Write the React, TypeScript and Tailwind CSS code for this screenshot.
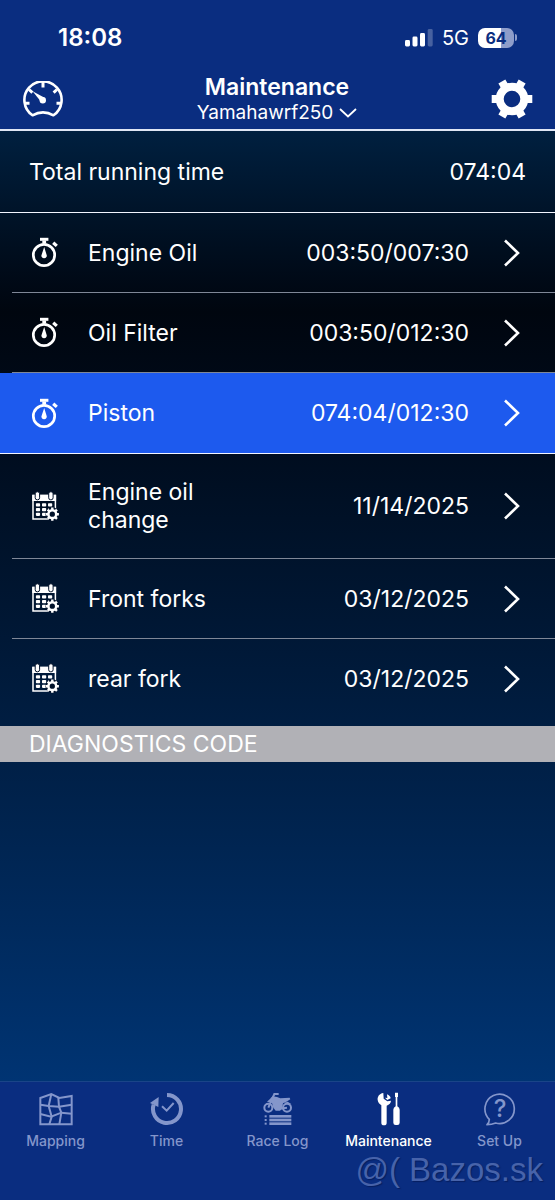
import type { ReactNode } from "react";

const INK = "#001129";

function GaugeIcon() {
  return (
    <svg width="40" height="37" viewBox="0 0 40 37" fill="none" stroke="white">
      <path
        d="M9.5 34.3A18.6 18.6 0 1 1 30.5 34.3Q20 28.5 9.5 34.3Z"
        strokeWidth="2.6"
        strokeLinejoin="round"
      />
      <path d="M20 1v5.5M2 22.3h4.5M33.5 22.3h4.5M6 8.5l3.4 3.2M34 8.5l-3.4 3.2" strokeWidth="3" />
      <path d="M9.6 10.2L21.6 16.8L18 20.8Z" fill="white" stroke="none" />
      <circle cx="19.8" cy="19.3" r="3.2" fill="white" stroke="none" />
    </svg>
  );
}

function GearIcon() {
  return (
    <svg width="42" height="40" viewBox="-21 -20 42 40" fill="none" stroke="white">
      <circle r="12.3" strokeWidth="8" />
      <g strokeWidth="8">
        <path d="M-20.3 0H-13M13 0H20.3" />
        <path d="M-20.3 0H-13M13 0H20.3" transform="rotate(60)" />
        <path d="M-20.3 0H-13M13 0H20.3" transform="rotate(120)" />
      </g>
    </svg>
  );
}

function StopwatchIcon() {
  return (
    <svg width="30" height="31" viewBox="0 0 30 31" fill="white">
      <circle cx="14" cy="18" r="10.7" fill="none" stroke="white" strokeWidth="2.7" />
      <rect x="10" y="0.8" width="8.4" height="3" />
      <rect x="12.3" y="3.5" width="3.8" height="3" />
      <rect x="-2.4" y="-1.6" width="4.8" height="3.2" transform="translate(25 7.3) rotate(42)" />
      <path d="M14.2 10L16.5 17.4A2.7 2.7 0 1 1 11.7 17.4Z" />
    </svg>
  );
}

function CalendarIcon() {
  return (
    <svg width="30" height="31" viewBox="0 0 30 31" fill="white">
      <path d="M3 4.5H25.4V28H3Z" fill="none" stroke="white" strokeWidth="1.5" />
      <rect x="2.3" y="3.8" width="23.8" height="6.2" />
      <g stroke={INK} strokeWidth="1">
        <rect x="5.2" y="0.8" width="4.4" height="8" rx="2" />
        <rect x="18.7" y="0.8" width="4.4" height="8" rx="2" />
      </g>
      {[12.3, 17, 21.7].map((y) => (
        <g key={y}>
          <rect x="5.9" y={y} width="4.2" height="3.2" rx="0.8" />
          <rect x="12" y={y} width="4.2" height="3.2" rx="0.8" />
          <rect x="18" y={y} width="4.2" height="3.2" rx="0.8" />
        </g>
      ))}
      <g transform="translate(22.3 23.2)">
        <circle r="6.9" fill={INK} />
        <circle r="3.9" fill="none" stroke="white" strokeWidth="2.5" />
        {[0, 45, 90, 135].map((deg) => (
          <path
            key={deg}
            d="M-6.6 0H-4M4 0H6.6"
            stroke="white"
            strokeWidth="2.4"
            transform={`rotate(${deg})`}
          />
        ))}
      </g>
    </svg>
  );
}

function ChevronRight() {
  return (
    <svg width="18" height="28" viewBox="0 0 18 28" fill="none" stroke="white" strokeWidth="2.6">
      <path d="M2 1.5L15 14L2 26.5" />
    </svg>
  );
}

function MapIcon() {
  return (
    <svg width="34" height="34" viewBox="0 0 102 102" fill="none" stroke="currentColor" strokeWidth="6">
      <path d="M4 18L37 6L61 18L98 12V97H4Z" />
      <path d="M4 38L29 42L60 44L98 38M4 66L36 74L67 62L98 65" />
      <path d="M37 6L29 42L38 74L31 97M58 18L60 44L67 62L61 97" />
    </svg>
  );
}

function TimeIcon() {
  return (
    <svg width="34" height="34" viewBox="0 0 102 102" fill="none" stroke="currentColor">
      <path d="M51 9A42 42 0 1 1 11 38" strokeWidth="12" />
      <path d="M0 33L26 15L25 45Z" fill="currentColor" stroke="none" />
      <path d="M36 43L50 56L71 33" strokeWidth="6" />
    </svg>
  );
}

function RaceIcon() {
  return (
    <svg width="30" height="34" viewBox="0 0 90 102" fill="currentColor">
      <g fill="none" stroke="currentColor" strokeWidth="6">
        <circle cx="16" cy="47" r="12" />
        <circle cx="72" cy="47" r="12" />
        <path d="M16 47L34 6H47M48 50L72 47" />
      </g>
      <path d="M28 13L42 15L52 19L80 17L82 22L70 29L60 34L57 50L51 56H38L31 47L27 33L12 29L20 22Z" />
      <path d="M62 31L74 29L86 37L80 36L70 32Z" />
      <rect x="19" y="69" width="66" height="8" />
      <rect x="19" y="80" width="66" height="8" />
      <rect x="19" y="91" width="66" height="8" />
      <rect x="5" y="70" width="6" height="6" />
      <rect x="5" y="81" width="6" height="6" />
      <rect x="5" y="92" width="6" height="6" />
    </svg>
  );
}

function ToolsIcon() {
  return (
    <svg width="26" height="34" viewBox="32 19 78 102" fill="currentColor">
      <path d="M54 22C41 24 36 34 37 43C38 51 43 55 48 59V111A8 8 0 0 0 64 111V60C72 57 77 51 77 45L66 47L55 39Z" />
      <path d="M65 26L66 37L59 36L66 43L76 38C76 33 71 28 65 26Z" />
      <path d="M89 21H98V34H96V62Q103 66 103 72V111Q103 118 96 118H91Q84 118 84 111V72Q84 66 91 62V34H89Z" />
    </svg>
  );
}

function HelpIcon() {
  return (
    <svg width="34" height="34" viewBox="0 0 102 102" fill="none" stroke="currentColor" strokeWidth="5">
      <path d="M19 82A44 44 0 1 1 38 93Q26 98 12 98Q19 92 19 82Z" strokeLinejoin="round" />
      <text
        x="51"
        y="76"
        textAnchor="middle"
        fontSize="72"
        fontWeight="500"
        fill="currentColor"
        stroke="none"
      >
        ?
      </text>
    </svg>
  );
}

function StatusBar() {
  return (
    <div className="flex h-[75px] items-center justify-between pr-[38px] pl-[58px]">
      <span className="text-2xl font-semibold">18:08</span>
      <div className="flex items-center gap-[9px]">
        <svg width="28" height="18" viewBox="0 0 28 18" fill="white">
          <rect x="0" y="11" width="5" height="6.5" rx="1.4" />
          <rect x="7.5" y="7.5" width="5" height="10" rx="1.4" />
          <rect x="15" y="4" width="5" height="13.5" rx="1.4" />
          <rect x="22.7" y="0" width="5" height="17.5" rx="1.4" opacity="0.25" />
        </svg>
        <span className="text-xl">5G</span>
        <div className="flex items-center gap-px">
          <span className="flex h-5 w-9 items-center justify-center rounded-[7px] bg-linear-to-r from-white from-64% to-[#8e9dca] to-64% text-base font-bold text-[#0a2d80]">
            64
          </span>
          <span className="h-[7px] w-0.5 rounded-r-full bg-[#8e9dca]" />
        </div>
      </div>
    </div>
  );
}

function Header() {
  return (
    <header className="border-b-2 border-[#dfe6f5] bg-[#0a2d80]">
      <StatusBar />
      <div className="flex h-[54px] items-center justify-between pr-[22px] pb-1.5 pl-[23px]">
        <button aria-label="Dashboard">
          <GaugeIcon />
        </button>
        <div className="flex flex-col items-center">
          <h1 className="text-[23px] leading-7 font-semibold">Maintenance</h1>
          <button className="flex items-center gap-1.5 text-[19px] leading-6">
            Yamahawrf250
            <svg width="18" height="10" viewBox="0 0 18 10" fill="none" stroke="white" strokeWidth="1.8">
              <path d="M1 1L9 8.5L17 1" />
            </svg>
          </button>
        </div>
        <button aria-label="Settings">
          <GearIcon />
        </button>
      </div>
    </header>
  );
}

type ItemProps = {
  icon: ReactNode;
  label: string;
  value: string;
  active?: boolean;
  last?: boolean;
};

function Item({ icon, label, value, active, last }: ItemProps) {
  return (
    <li className={active ? "border-b border-[#f2f5ff] bg-[#1d5aee]" : last ? "" : "pl-3"}>
      <button
        className={`flex w-full items-center pr-[34px] text-left ${
          last ? "min-h-[87px] pb-2" : "min-h-20 py-6"
        } ${active || last ? "pl-[30px]" : "border-b border-[#7f8797] pl-[18px]"}`}
      >
        <span className="w-[58px] shrink-0">{icon}</span>
        <span className="w-40">{label}</span>
        <span className="flex-1 pr-[34px] text-right">{value}</span>
        <ChevronRight />
      </button>
    </li>
  );
}

function Tab({ icon, label, active }: { icon: ReactNode; label: string; active?: boolean }) {
  return (
    <a
      href="#"
      aria-current={active ? "page" : undefined}
      className={`flex flex-1 flex-col items-center gap-[5px] ${
        active ? "text-white" : "text-[#8496cb]"
      }`}
    >
      {icon}
      <span className="text-sm leading-5 font-medium">{label}</span>
    </a>
  );
}

function App() {
  return (
    <div className="relative flex min-h-screen flex-col bg-[#0a2d80] font-['Inter','Liberation_Sans',sans-serif] text-white">
      <Header />

      <main className="flex-1 bg-linear-to-b from-[#002040] via-[#00060f] via-19% to-[#003473] text-[23px] leading-7">
        <div className="flex h-[82px] items-center justify-between border-b border-[#f2f5ff] px-[29px]">
          <span>Total running time</span>
          <span>074:04</span>
        </div>
        <ul>
          <Item icon={<StopwatchIcon />} label="Engine Oil" value="003:50/007:30" />
          <Item icon={<StopwatchIcon />} label="Oil Filter" value="003:50/012:30" />
          <Item icon={<StopwatchIcon />} label="Piston" value="074:04/012:30" active />
          <Item icon={<CalendarIcon />} label="Engine oil change" value="11/14/2025" />
          <Item icon={<CalendarIcon />} label="Front forks" value="03/12/2025" />
          <Item icon={<CalendarIcon />} label="rear fork" value="03/12/2025" last />
        </ul>
        <h2 className="bg-[#b1b1b6] px-[29px] py-1">DIAGNOSTICS CODE</h2>
      </main>

      <nav className="flex h-[119px] border-t border-[#1a4488] pt-[10px]">
        <Tab icon={<MapIcon />} label="Mapping" />
        <Tab icon={<TimeIcon />} label="Time" />
        <Tab icon={<RaceIcon />} label="Race Log" />
        <Tab icon={<ToolsIcon />} label="Maintenance" active />
        <Tab icon={<HelpIcon />} label="Set Up" />
      </nav>

      {/* Watermark */}
      <span className="pointer-events-none absolute right-3 bottom-3 font-['Liberation_Sans',sans-serif] text-[33px] leading-9 text-[#4763aa] text-shadow-[1px_1px_1px_#061f60]">
        @( Bazos.sk
      </span>
    </div>
  );
}

export default App;
